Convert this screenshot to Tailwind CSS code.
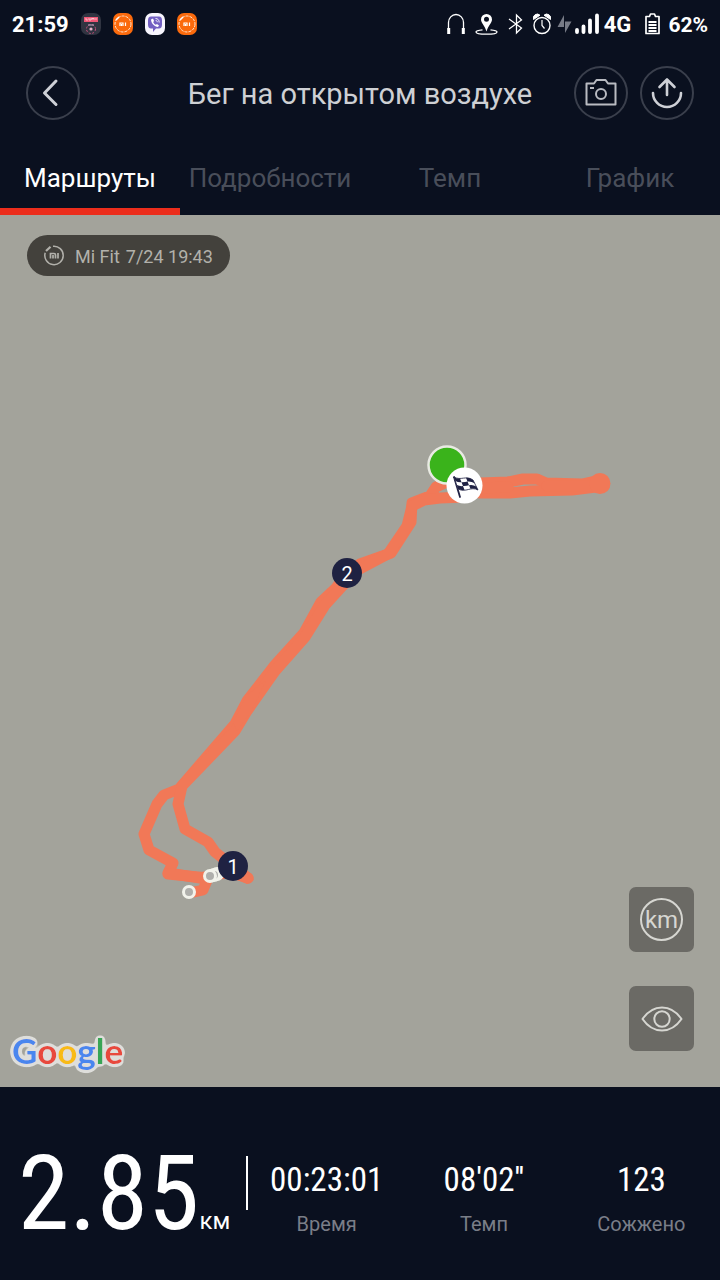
<!DOCTYPE html>
<html lang="ru">
<head>
<meta charset="utf-8">
<meta name="viewport" content="width=device-width, initial-scale=1">
<title>Бег на открытом воздухе</title>
<script src="https://cdn.jsdelivr.net/npm/@tailwindcss/browser@4"></script>
</head>
<body class="flex min-h-screen flex-col bg-[#0a101f] font-['Roboto','Noto_Sans',sans-serif] text-white">

<!-- Status bar -->
<div class="flex h-12 items-center justify-between px-3">
  <div class="flex items-center gap-3">
    <span class="pt-0.5 text-[22px] leading-6 font-bold">21:59</span>
    <svg class="h-[22px] w-5" viewBox="0 0 20 22"><rect width="20" height="22" rx="7" fill="#303441"/><rect x="3" y="4" width="14" height="5" fill="#ef5675"/><path d="M5 5v2h2M8 5v2h2V5M11 7V5l1 1 1-1v2M15 5v2" stroke="#fbd3da" stroke-width=".8" fill="none"/><circle cx="10" cy="16" r="4.500" fill="none" stroke="#c94f7d" stroke-width="1" stroke-dasharray="2 1.6"/><circle cx="10" cy="16" r="1.600" fill="#e7b2c8"/><path d="M7 12h6" stroke="#b9a9c4"/></svg>
    <svg class="h-[22px] w-5" viewBox="0 0 20 22"><rect width="20" height="22" rx="7" fill="#fb6a0c"/><circle cx="10" cy="11" r="8" fill="none" stroke="#ffe3cc" stroke-width="1" stroke-dasharray="3 1"/><path d="M3 7l3-3" stroke="#fff" stroke-width="1.600"/><path d="M7 13V10h3v3M8.500 11v2M12.500 9.500V13" stroke="#fff" stroke-width="1.200" fill="none"/></svg>
    <svg class="h-[22px] w-5" viewBox="0 0 20 22"><rect width="20" height="22" rx="7" fill="#f7f5fd"/><path d="M6 3.500h8q3 0 3 4v4q0 4-3 4h-3l-3 3.500v-3.500H6q-3 0-3-4v-4q0-4 3-4z" fill="#7360c2"/><path d="M6 6.500c0 3.500 3.500 7.500 7 7.500l1-1.500-2-1.500-1.200.8c-1.500-.7-2.200-1.700-2.600-2.800l.9-1L8 5.500z" fill="#fff"/><path d="M10.500 5.500c2.300 0 3.700 1.500 3.700 4M10.700 7.500c1.100 0 1.600.8 1.600 1.700" stroke="#fff" stroke-width=".9" fill="none"/></svg>
    <svg class="h-[22px] w-5" viewBox="0 0 20 22"><rect width="20" height="22" rx="7" fill="#fb6a0c"/><circle cx="10" cy="11" r="8" fill="none" stroke="#ffe3cc" stroke-width="1" stroke-dasharray="3 1"/><path d="M3 7l3-3" stroke="#fff" stroke-width="1.600"/><path d="M7 13V10h3v3M8.500 11v2M12.500 9.500V13" stroke="#fff" stroke-width="1.200" fill="none"/></svg>
  </div>
  <div class="flex items-center">
    <svg class="mr-2.5 h-6 w-[18px]" viewBox="0 0 18 24"><path d="M1.500 18V10.500a7.500 8 0 0 1 15 0V18" fill="none" stroke="#fff" stroke-width="1.300"/><path d="M1.700 16v6M16.300 16v6" stroke="#fff" stroke-width="3"/></svg>
    <svg class="mr-2.5 h-6 w-[23px]" viewBox="0 0 23 24"><path d="M7.500 17.800C3.500 18.200 1 19 1 20c0 1.300 4.700 2.200 10.500 2.200S22 21.300 22 20c0-1-2.500-1.800-6.500-2.200" fill="none" stroke="#fff" stroke-width="1.300"/><path fill-rule="evenodd" d="M11.500 2a5.500 5.500 0 0 1 5.500 5.500c0 3.500-3.800 6-5.500 12-1.700-6-5.500-8.500-5.500-12A5.500 5.500 0 0 1 11.500 2zm0 2.800a2.500 2.500 0 1 0 0 5 2.500 2.500 0 1 0 0-5z" fill="#fff"/></svg>
    <svg class="mr-2.5 h-6 w-[15px]" viewBox="0 0 15 24"><path d="M1 7l12.500 9L8.500 21V3l5 5L1 17" fill="none" stroke="#fff" stroke-width="1.300"/></svg>
    <svg class="h-6 w-[18px]" viewBox="0 0 18 24"><circle cx="9" cy="13.500" r="8" fill="none" stroke="#fff" stroke-width="1.400"/><path d="M9 8v5.500l2.500 3" fill="none" stroke="#fff" stroke-width="1.200"/><path d="M.5 7.500A4 4 0 0 1 7 3.200zM17.500 7.500A4 4 0 0 0 11 3.200z" fill="#fff" stroke="#fff"/></svg>
    <svg class="mr-1 h-6 w-[49px]" viewBox="551 0 49 24"><path d="M564 3v12h-6.500zM565 21V9.500h6.500z" fill="#777b86"/><path d="M577 18v2M583.500 14.500V20M590 8.500V20M597 3.500V20" stroke="#fff" stroke-width="3.800" stroke-linecap="round"/></svg>
    <span class="mr-3.5 pt-0.5 text-[22px] leading-6 font-bold">4G</span>
    <svg class="mr-2 h-6 w-[15px]" viewBox="0 0 15 24"><path d="M1 4.500h3.500L5.500 2h4l1 2.500H14V21.500H1z" fill="none" stroke="#fff" stroke-width="1.700" stroke-linejoin="round"/><path d="M3.500 10h8M3.500 13h8M3.500 16h8M3.500 19h8" stroke="#fff" stroke-width="1.800"/></svg>
    <span class="pt-0.5 text-[21px] leading-6 font-bold">62%</span>
  </div>
</div>

<!-- Title bar -->
<header class="grid h-[90px] grid-cols-[1fr_auto_1fr] items-center px-[26px]">
  <button type="button" aria-label="Назад" class="flex size-[54px] items-center justify-center rounded-full border-2 border-[#3a3f4c]">
    <svg class="size-8" viewBox="0 0 32 32" fill="none" stroke="#ced0d6" stroke-width="3" stroke-linecap="round" stroke-linejoin="round"><path d="M19 4L7.500 16 19 27.500"/></svg>
  </button>
  <h1 class="pt-0.5 text-[29px] leading-8 text-[#ced0d4]">Бег на открытом воздухе</h1>
  <div class="flex justify-end gap-3">
    <button type="button" aria-label="Снимок" class="flex size-[54px] items-center justify-center rounded-full border-2 border-[#3a3f4c]">
      <svg class="size-8" viewBox="0 0 32 32" fill="none" stroke="#b9bbc2" stroke-width="2" stroke-linejoin="round"><path d="M1.500 6.500H9L11.500 3h9L23 6.500h7.500v21h-29z"/><circle cx="16" cy="17" r="5"/><path d="M5 11h4"/></svg>
    </button>
    <button type="button" aria-label="Поделиться" class="flex size-[54px] items-center justify-center rounded-full border-2 border-[#3a3f4c]">
      <svg class="size-8" viewBox="0 0 32 32" fill="none" stroke="#ced0d6" stroke-width="2.600" stroke-linecap="round" stroke-linejoin="round"><path d="M2 16a14 14 0 0 0 28 0M16 18V2.500M8.500 10L16 2.500 23.500 10"/></svg>
    </button>
  </div>
</header>

<!-- Tabs -->
<nav class="grid grid-cols-4 text-[26px] leading-8 text-[#494e5a]">
  <a href="#" aria-current="page" class="flex h-[77px] items-center justify-center border-b-[7px] border-[#ec2d1c] pt-2.5 whitespace-nowrap text-white">Маршруты</a>
  <a href="#" class="flex h-[77px] items-center justify-center border-b-[7px] border-transparent pt-2.5 whitespace-nowrap">Подробности</a>
  <a href="#" class="flex h-[77px] items-center justify-center border-b-[7px] border-transparent pt-2.5 whitespace-nowrap">Темп</a>
  <a href="#" class="flex h-[77px] items-center justify-center border-b-[7px] border-transparent pt-2.5 whitespace-nowrap">График</a>
</nav>

<!-- Map -->
<main class="relative flex-1 bg-[#a3a39b]">
  <svg class="block w-full" viewBox="0 215 720 872" role="img" aria-label="Маршрут пробежки">
    <g fill="none" stroke="#f17857" stroke-width="11" stroke-linecap="round" stroke-linejoin="round">
      <path d="M447 482L436 487 430 496 412 503 411 522 391 553 360 564 347 573 336 588 321 602 304 633 275 665 247 701 235 724 179 789 164 795 157 804 144 834 149 850 173 863 168 873 200 878 230 872 248 878"/>
      <path d="M465 497L440 498 424 500 412 506 407 526 388 554 356 571 325 605 305 637 275 671 247 711 235 731 182 786 178 804 185 829 208 842 215 852 248 878"/>
      <path d="M168 874L208 878 203 890 194 892"/>
      <path d="M480 483L508 482 523 479 537 479 546 483 582 484 600 480"/>
      <path d="M480 493L510 493 530 491 572 490 604 486"/>
      <path d="M480 488L508 487M547 486L600 486"/>
    </g>
    <path d="M247 695L266 680 252 710 237 731 233 722z" fill="#f17857"/>
    <path d="M235 862L254 880 247 884 228 876z" fill="#f17857"/>
    <circle cx="600" cy="483.500" r="10.500" fill="#f17857"/>
    <circle cx="447" cy="465" r="18.500" fill="#3ab31b" stroke="#e9eae3" stroke-width="2.500"/>
    <circle cx="464.500" cy="485.500" r="18" fill="#fff"/>
    <g transform="translate(453 476)">
      <path d="M1 1L7 21" stroke="#1f2143" stroke-width="1.800" stroke-linecap="round"/>
      <path d="M1 1C8 5 13-1 20 4L25 14C18 10 13 17 5 13z" fill="#fff" stroke="#1f2143" stroke-width=".8"/>
      <path d="M1 1Q4 3 7 2.500L8.500 6.200Q5 6.500 2.500 5zM13 1.800Q17 1.500 20 4L21.700 7.300Q18 5 14.500 5.500zM8.500 6.200Q12 6.300 14.500 5.500L16 9.300Q13 10.200 10 10zM3.800 9Q7 10.500 10 10L11.500 14Q8 14.500 5 13zM16 9.300Q20 8.500 23.300 10.600L25 14Q21 12 17.500 12.800z" fill="#1f2143"/>
    </g>
    <g fill="#afafab" stroke="#f2f3eb" stroke-width="3">
      <circle cx="217" cy="874" r="5.500"/><circle cx="214" cy="875" r="5.500"/><circle cx="210" cy="876" r="5.500"/><circle cx="189" cy="892" r="5.500"/>
    </g>
    <circle cx="347" cy="573" r="15" fill="#1f2242"/>
    <circle cx="233" cy="866" r="15" fill="#1f2242"/>
    <g class="text-[20px]" fill="#fff" text-anchor="middle">
      <text x="347" y="581">2</text>
      <text x="233" y="874">1</text>
    </g>
  </svg>

  <div class="absolute top-5 left-[27px] flex h-[41px] items-center rounded-full bg-[#43413c] px-[17px] text-lg leading-5 text-[#b2b1ab]">
    <svg class="mr-2.5 size-[21px]" viewBox="0 0 21 21" fill="none" stroke="#b2b1ab" stroke-width="1.500"><path d="M9 1.300a9.200 9.200 0 1 1-7.800 6.500"/><path d="M2 6l4.500-4.200" stroke-width="2.200"/><path d="M6.500 13.500V8.500H10q1.500 0 1.500 1.500v3.500M9 10v3.500M14 8v5.500" stroke-width="1.700"/></svg>
    <span class="mr-1.5 pt-0.5">Mi Fit</span>
    <span class="pt-0.5">7/24 19:43</span>
  </div>

  <div class="absolute right-[26px] bottom-9 flex flex-col gap-[34px]">
    <button type="button" aria-label="Километры" class="flex size-[65px] items-center justify-center rounded-[7px] bg-[#6b6a65]">
      <span class="flex size-[43px] items-center justify-center rounded-full border-2 border-[#d6d6d1] text-2xl leading-6 text-[#d6d6d1]">km</span>
    </button>
    <button type="button" aria-label="Показать карту" class="flex size-[65px] items-center justify-center rounded-[7px] bg-[#6b6a65]">
      <svg class="h-7 w-[42px]" viewBox="0 0 42 28" fill="none" stroke="#d6d6d1" stroke-width="2" stroke-linejoin="round"><path d="M1.500 14C7 6 14 2.500 21 2.500S35 6 40.500 14C35 22 28 25.500 21 25.500S7 22 1.500 14z"/><circle cx="21" cy="14" r="7.700"/></svg>
    </button>
  </div>

  <svg class="absolute bottom-0 left-1 h-16 w-[132px]" viewBox="0 0 132 64" role="img" aria-label="Google">
    <filter id="halo" x="-10%" y="-20%" width="120%" height="150%">
      <feGaussianBlur in="SourceAlpha" stdDeviation="2.500"/>
      <feComponentTransfer result="edge"><feFuncA type="linear" slope="16" intercept="-1"/></feComponentTransfer>
      <feFlood flood-color="#dededb"/>
      <feComposite in2="edge" operator="in" result="plate"/>
      <feMerge><feMergeNode in="plate"/><feMergeNode in="SourceGraphic"/></feMerge>
    </filter>
    <text x="8" y="41" class="font-['Lato',sans-serif] text-[35px] font-bold" filter="url(#halo)" color-interpolation-filters="sRGB"><tspan fill="#4a86ee">G</tspan><tspan fill="#e8493c">o</tspan><tspan fill="#f8bb14">o</tspan><tspan fill="#4a86ee">g</tspan><tspan fill="#38a555">l</tspan><tspan fill="#e8493c">e</tspan></text>
  </svg>
</main>

<!-- Summary -->
<footer class="flex h-[193px]">
  <div class="flex w-[246px] items-baseline pt-[43px] pl-[18px]">
    <span class="font-['Roboto_Condensed','Liberation_Sans_Narrow',sans-serif] text-[104px] leading-[128px]">2.85</span>
    <span class="text-2xl">км</span>
  </div>
  <div class="mt-[69px] h-[54px] w-0.5 bg-white"></div>
  <dl class="grid flex-1 grid-cols-3 text-center">
    <div class="flex flex-col-reverse justify-end gap-3 pt-[73px]">
      <dt class="text-xl leading-6 text-[#7a7e88]">Время</dt>
      <dd class="font-['Roboto_Condensed','Liberation_Sans_Narrow',sans-serif] text-[33px] leading-10">00:23:01</dd>
    </div>
    <div class="flex flex-col-reverse justify-end gap-3 pt-[73px]">
      <dt class="text-xl leading-6 text-[#7a7e88]">Темп</dt>
      <dd class="font-['Roboto_Condensed','Liberation_Sans_Narrow',sans-serif] text-[33px] leading-10">08'02''</dd>
    </div>
    <div class="flex flex-col-reverse justify-end gap-3 pt-[73px]">
      <dt class="text-xl leading-6 text-[#7a7e88]">Сожжено</dt>
      <dd class="font-['Roboto_Condensed','Liberation_Sans_Narrow',sans-serif] text-[33px] leading-10">123</dd>
    </div>
  </dl>
</footer>
</body>
</html>
